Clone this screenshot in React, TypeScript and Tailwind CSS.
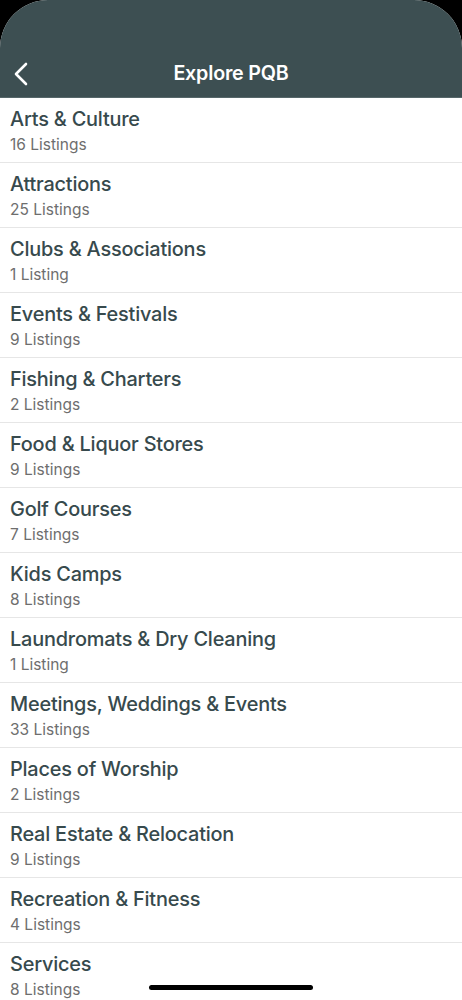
const categories: [string, string][] = [
  ["Arts & Culture", "16 Listings"],
  ["Attractions", "25 Listings"],
  ["Clubs & Associations", "1 Listing"],
  ["Events & Festivals", "9 Listings"],
  ["Fishing & Charters", "2 Listings"],
  ["Food & Liquor Stores", "9 Listings"],
  ["Golf Courses", "7 Listings"],
  ["Kids Camps", "8 Listings"],
  ["Laundromats & Dry Cleaning", "1 Listing"],
  ["Meetings, Weddings & Events", "33 Listings"],
  ["Places of Worship", "2 Listings"],
  ["Real Estate & Relocation", "9 Listings"],
  ["Recreation & Fitness", "4 Listings"],
  ["Services", "8 Listings"],
];

export default function App() {
  return (
    <div className="relative h-[1000px] w-[462px] overflow-hidden bg-black"
      style={{ fontFamily: "Inter, 'Noto Sans', sans-serif" }}>
      <div className="h-full overflow-hidden rounded-t-[48px] bg-white">
        {/* Header */}
        <div className="flex h-[98px] items-end border-b border-[#56676a] bg-[#3d4f52] pb-[10px]">
          <div className="relative flex h-[26px] w-full items-center justify-center">
            <svg className="absolute left-[13px] top-[1px]" width="16" height="24" viewBox="0 0 16 24" fill="none">
              <path d="M13 2L3 12l10 10" stroke="white" strokeWidth="2.6" strokeLinecap="round" strokeLinejoin="round" />
            </svg>
            <span className="text-[19.7px] font-semibold tracking-[-0.2px] text-white">Explore PQB</span>
          </div>
        </div>

        {/* List */}
        <div className="flex flex-col">
          {categories.map(([name, count]) => (
            <div key={name} className="flex h-[65px] flex-col border-b border-[#e6e6e6] pl-[10px] pt-[9px]">
              <span className="text-[19.9px] font-medium leading-[24px] tracking-[-0.2px] text-[#374a4d]">{name}</span>
              <span className="mt-[4px] text-[15.5px] leading-[20px] text-[#6e6e6e]">{count}</span>
            </div>
          ))}
        </div>
      </div>

      {/* Home indicator */}
      <div className="absolute bottom-[10px] left-[149px] h-[5px] w-[164px] rounded-full bg-black" />
    </div>
  );
}
